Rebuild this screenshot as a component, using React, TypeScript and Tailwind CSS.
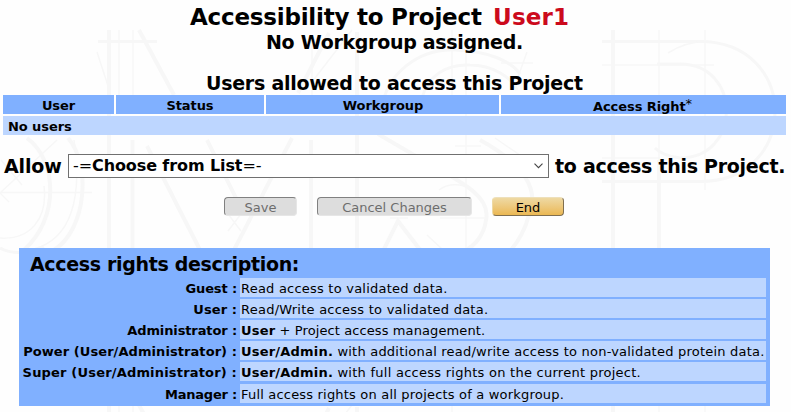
import type { ReactNode } from "react";

const rights: { name: string; label: string; body: string; text: ReactNode }[] = [
  { name: "Guest", label: "tracking-[-0.13px]", body: "tracking-[0.22px]", text: "Read access to validated data." },
  { name: "User", label: "tracking-[0.07px]", body: "tracking-[0.24px]", text: "Read/Write access to validated data." },
  { name: "Administrator", label: "tracking-[-0.12px]", body: "tracking-[0.1px]", text: <><B>User</B> + Project access management.</> },
  { name: "Power (User/Administrator)", label: "tracking-[0.07px]", body: "tracking-[0.22px]", text: <><B>User/Admin.</B> with additional read/write access to non-validated protein data.</> },
  { name: "Super (User/Administrator)", label: "tracking-[0.18px]", body: "tracking-[0.26px]", text: <><B>User/Admin.</B> with full access rights on the current project.</> },
  { name: "Manager", label: "tracking-[-0.22px]", body: "tracking-[0.19px]", text: "Full access rights on all projects of a workgroup." },
];

function B({ children }: { children: ReactNode }) {
  return <b className="tracking-[0.2px]">{children}</b>;
}

/* Faint drafting-style letters behind the page */
function Backdrop() {
  return (
    <svg className="absolute inset-0 -z-10" width="791" height="412" viewBox="0 0 791 412" fill="none" stroke="#f7f7f7" aria-hidden="true">
      <defs>
        <g id="letters">
          <g strokeWidth="4">
            <path d="M109 30V330M132.500 140V330M311 140V330M357 32V330" />
            <path d="M139 30L174 95M147 146L200 250M207 140L242 210M329 33L298 93M292 138L234 250" />
            <path d="M98 41.500H157" strokeWidth="3" />
            <path d="M382 108C386 75 418 48 455 50C488 51 511 61 520 74" strokeWidth="3" />
            <path d="M422 98C428 75 447 64 470 65C493 65 512 78 517 90" strokeWidth="3" />
            <path d="M378 134L426 162C466 184 491 198 486 220C484 235 475 246 464 251M480 140C524 164 540 190 529 215C525 230 518 242 510 251" />
            <path d="M383 251L398 221L421 251" />
            <path d="M613 30V250M659 160V250" />
            <path d="M602 41.500H700C800 41.500 800 181.500 700 181.500H602" strokeWidth="3" />
            <path d="M657 64H680C742 64 742 158 680 158Q663 156 655 148" strokeWidth="3" />
            <path d="M27 138C57 160 60 218 24 250M68 138C91 164 87 229 54 250" />
            <path d="M0 248C10 254 30 254 44 247" strokeWidth="3" />
          </g>
          <g strokeWidth="1.500">
            <path d="M119 30V100M133 30V95M312 45V95M97 52L110 92M352 30L312 82M228 214L241 231M241 214L228 231" />
            <path d="M452 30V95M466 48V250M527 52L514 88M501 63H533M439 190C450 181 470 184 478 195M440 218H488M390 218H408" />
            <path d="M659 30V160M705 30V190M602 65H714M602 158H660M668 53Q690 39 714 42" />
            <path d="M0 192.500H92M57 140L0 193L9 202M1 160L22 185M44 186C48 219 30 240 0 238M74 140C83 200 70 239 34 249" />
            <path d="M427 235L443 250M495 138L527 160M455 146H481" />
          </g>
        </g>
      </defs>
      <use href="#letters" />
      <use href="#letters" y="375" />
    </svg>
  );
}

export default function App() {
  return (
    <main className="relative isolate h-[412px] w-[791px] overflow-hidden bg-[#fefefe] font-['DejaVu_Sans',Verdana,sans-serif] text-[13px] text-black">
      <Backdrop />
      <h1 className="flex h-8 items-center pt-[2px] pl-[190px] text-[23px] leading-8 font-bold whitespace-pre">
        <span className="w-[303px] tracking-[-0.22px]">Accessibility to Project</span>
        <span className="tracking-[0.2px] text-[#cc0a1c]">User1</span>
      </h1>
      <p className="h-[21px] pl-[266px] text-[19px] leading-[21px] font-bold tracking-[-0.3px] whitespace-nowrap">No Workgroup assigned.</p>
      <h2 className="mt-[18px] h-6 pl-[206px] text-[19px] leading-6 font-bold tracking-[-0.25px] whitespace-nowrap">Users allowed to access this Project</h2>

      <div className="ml-[3px] grid w-[783px] grid-cols-[111px_148px_233px_285px] gap-[2px] text-center leading-[19px] font-bold tracking-[-0.08px]">
        <div className="h-[19px] bg-[#80b0ff] pt-[1px]">User</div>
        <div className="h-[19px] bg-[#80b0ff] pt-[1px]">Status</div>
        <div className="h-[19px] bg-[#80b0ff] pt-[1px] pl-px">Workgroup</div>
        <div className="flex h-[19px] justify-center bg-[#80b0ff] pt-[2px] pr-[2px]">
          Access Right<span className="-mt-[3px] text-[13px] font-normal">*</span>
        </div>
        <div className="col-span-4 h-[19px] bg-[#bdd6ff] pt-[1px] pl-[5px] text-left">No users</div>
      </div>

      <div className="mt-[19px] flex h-6 items-center pl-[4px] text-[19px] leading-6 font-bold whitespace-nowrap">
        <span className="w-16 tracking-[-0.15px]">Allow</span>
        <div role="combobox" aria-expanded="false" aria-controls="users" className="flex h-6 w-[481px] items-center justify-between border border-[#707070] bg-white pr-[5px] pl-[4px] text-[16px] tracking-[-0.1px]">
          <span><span className="font-normal">-=</span>Choose from List<span className="font-normal">=-</span></span>
          <svg width="9" height="6" viewBox="0 0 9 6" fill="none" stroke="#444" strokeWidth="1.100"><path d="M.5 .7L4.500 4.700L8.500 .7" /></svg>
        </div>
        <span className="pl-[6px] tracking-[-0.28px]">to access this Project.</span>
      </div>

      <div className="mt-[19px] flex h-[19px] pl-56 leading-[19px]">
        <button disabled className="h-[19px] w-[73px] rounded-[4px] border border-t-[#808080] border-r-[#e6e6e6] border-b-[#e6e6e6] border-l-[#808080] bg-[#ddd] text-[#6d6d6d]">Save</button>
        <button disabled className="ml-5 h-[19px] w-[155px] rounded-[4px] border border-t-[#808080] border-r-[#e6e6e6] border-b-[#e6e6e6] border-l-[#808080] bg-[#ddd] text-[#6d6d6d]">Cancel Changes</button>
        <button className="ml-5 h-[19px] w-[72px] rounded-[4px] border border-t-[#eee0bb] border-r-[#806f50] border-b-[#806f50] border-l-[#eed9a3] bg-linear-to-b from-[#eed9a3] to-[#ebb852]">End</button>
      </div>

      <section className="mt-8 ml-[19px] h-[158px] w-[751px] bg-[#80b0ff]">
        <h2 className="h-[30px] pt-[4px] pl-[11px] text-[19px] leading-6 font-bold tracking-[-0.33px]">Access rights description:</h2>
        <dl className="grid grid-cols-[219px_526px] grid-rows-[repeat(4,19px)_20px_19px] gap-x-[2px] gap-y-[2px] leading-[19px] whitespace-nowrap">
          {rights.map(({ name, label, body, text }) => (
            <div key={name} className="contents">
              <dt className={`h-[19px] pt-[1px] pr-px text-right font-bold ${label}`}>{name} :</dt>
              <dd className={`h-[19px] bg-[#bdd6ff] pt-[1px] pl-px ${body}`}>{text}</dd>
            </div>
          ))}
        </dl>
      </section>
    </main>
  );
}
